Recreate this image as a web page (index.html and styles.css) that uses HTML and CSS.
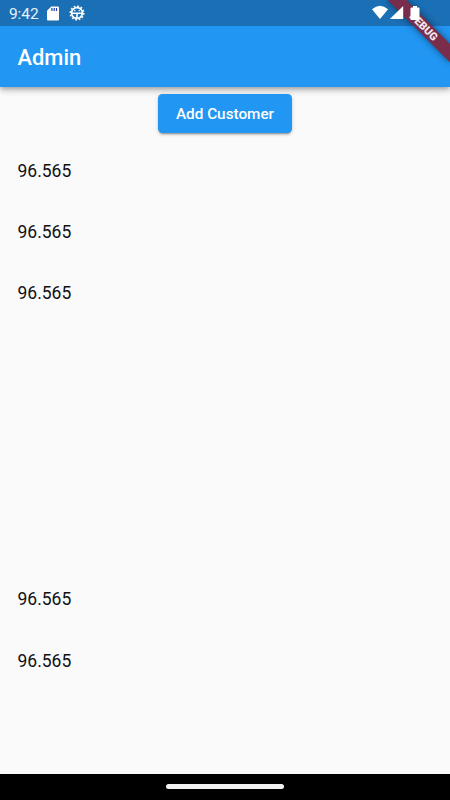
FILE: index.html
```
<!DOCTYPE html>
<html lang="en">
<head>
<meta charset="utf-8">
<title>Admin</title>
<link rel="stylesheet" href="styles.css">
</head>
<body>
<div class="screen">
  <header class="top">
    <div class="status">
      <span class="clock">9:42</span>
      <svg class="sd" width="12" height="15" viewBox="0 0 12 15"><path d="M4.3.5H11q1 0 1 1v12q0 1-1 1H1q-1 0-1-1V4.8z" fill="#fff"/><path d="M4.9 2v3M7.2 2v3M9.5 2v3" stroke="#1d3fad" stroke-width="1.2"/></svg>
      <svg class="gear" width="16" height="16" viewBox="0 0 16 16" fill="none" stroke="#fff"><circle cx="8" cy="8" r="5.4" stroke-width="1.7"/><circle cx="8" cy="8" r="6.8" stroke-width="1.5" stroke-dasharray="1.8 1.76"/><path d="M2.5 8.2h11M8 8v5.5" stroke-width="1.6"/><path d="M5.1 5.6h1.3M9.6 5.6h1.3" stroke-width="1.3"/></svg>
    </div>
    <h1>Admin</h1>
  </header>
  <main>
    <button class="add">Add Customer</button>
    <ul>
      <li>96.565</li>
      <li>96.565</li>
      <li>96.565</li>
      <li></li>
      <li></li>
      <li></li>
      <li></li>
      <li>96.565</li>
      <li>96.565</li>
    </ul>
  </main>
  <footer><div class="handle"></div></footer>
  <div class="banner">DEBUG</div>
  <svg class="signals" width="49" height="16" viewBox="0 0 49 16" fill="#fff"><path d="M0 4.2Q8-2.8 16 4.2L8 14z"/><path d="M31.2 1v13H17.8z"/><path d="M41 1h4v1.4h1.5q1 0 1 1V14q0 1-1 1h-7q-1 0-1-1V3.4q0-1 1-1H41z"/></svg>
</div>
</body>
</html>
```
FILE: styles.css
```
* { box-sizing: border-box; }
body { margin: 0; font-family: Roboto, sans-serif; }
.screen {
  position: relative;
  display: flex;
  flex-direction: column;
  width: 450px;
  height: 800px;
  overflow: hidden;
  background: #fafafa;
}
.top {
  height: 87px;
  flex: none;
  background: #2196f3;
  box-shadow: 0 2px 4px -1px rgba(0,0,0,.2), 0 4px 5px rgba(0,0,0,.14), 0 1px 10px rgba(0,0,0,.12);
}
.status {
  display: flex;
  align-items: center;
  height: 26px;
  padding: 0 29px 0 9px;
  background: #1b6fb5;
  color: #e9f1f8;
}
.clock { width: 38px; font-size: 15.5px; line-height: 26px; padding-top: 2px; letter-spacing: -.1px; }
.gear { margin-left: 10px; }
h1 {
  margin: 0;
  padding-left: 17.5px;
  font-size: 21.9px;
  font-weight: 500;
  line-height: 64px;
  letter-spacing: 0;
  color: #fff;
}
main { flex: 1; display: flex; flex-direction: column; align-items: center; padding-top: 7px; }
.add {
  flex: none;
  width: 133.5px;
  height: 39px;
  padding: 0;
  border: 0;
  border-radius: 4.4px;
  background: #2196f3;
  color: #fff;
  font: 500 15.3px Roboto, sans-serif;
  letter-spacing: 0;
  box-shadow: 0 3px 1px -2px rgba(0,0,0,.2), 0 2px 2px rgba(0,0,0,.14), 0 1px 5px rgba(0,0,0,.12);
}
ul { width: 100%; margin: 0; padding: 7.5px 17.5px 0; list-style: none; }
li { height: 61.25px; font-size: 17.5px; line-height: 61.25px; color: #111; }
footer {
  flex: none;
  display: flex;
  justify-content: center;
  height: 26px;
  padding-top: 10.3px;
  background: #000;
}
.handle { width: 118px; height: 5px; border-radius: 3px; background: #f2f2f2; }
.banner {
  position: absolute;
  left: 406.25px;
  top: 30.6px;
  width: 87.5px;
  height: 13.1px;
  transform-origin: 43.75px -30.6px;
  transform: rotate(45deg);
  background: #792d4b;
  box-shadow: 0 0 7px rgba(0,0,0,.5);
  color: #f2e9ed;
  font-size: 10.9px;
  font-weight: 900;
  line-height: 13.4px;
  text-align: center;
}
.signals { position: absolute; left: 372px; top: 5px; }
```
